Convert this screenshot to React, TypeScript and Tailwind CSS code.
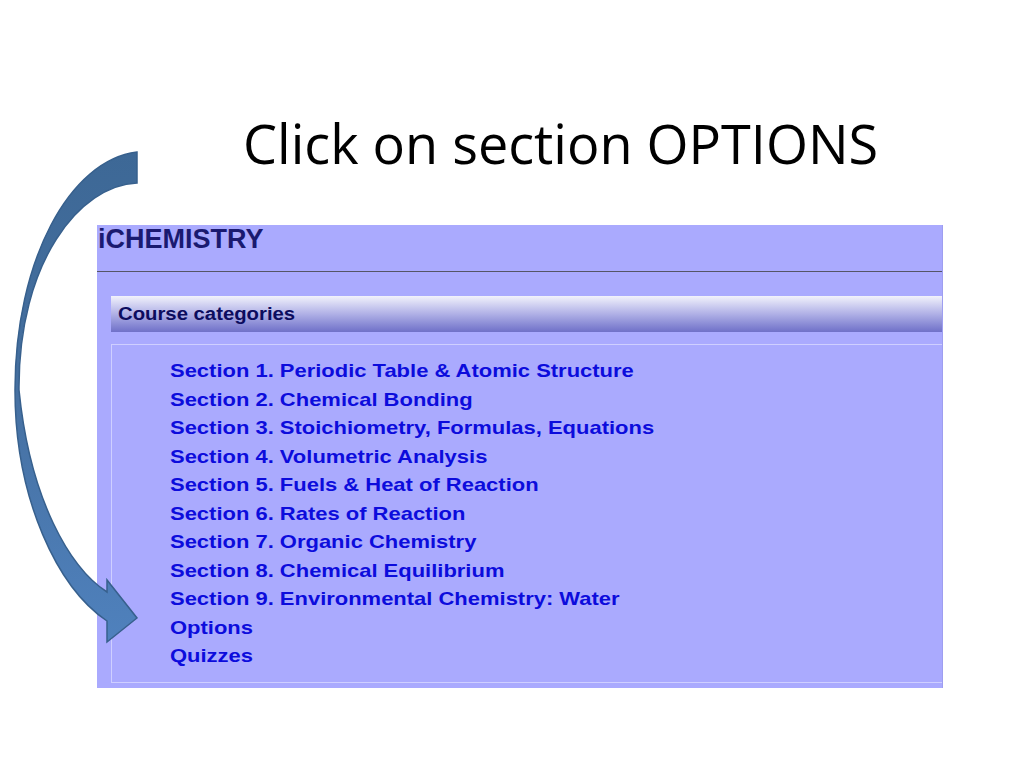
import React from "react";

const links = [
  "Section 1. Periodic Table & Atomic Structure",
  "Section 2. Chemical Bonding",
  "Section 3. Stoichiometry, Formulas, Equations",
  "Section 4. Volumetric Analysis",
  "Section 5. Fuels & Heat of Reaction",
  "Section 6. Rates of Reaction",
  "Section 7. Organic Chemistry",
  "Section 8. Chemical Equilibrium",
  "Section 9. Environmental Chemistry: Water",
  "Options",
  "Quizzes",
];

function CurvedArrow() {
  return (
    <svg
      className="absolute left-0 top-0 pointer-events-none"
      width="160"
      height="660"
      viewBox="0 0 160 660"
    >
      <defs>
        <linearGradient id="arrowFill" x1="0" y1="0" x2="0" y2="1">
          <stop offset="0" stopColor="#3d6896" />
          <stop offset="0.45" stopColor="#456f9f" />
          <stop offset="1" stopColor="#4f81bd" />
        </linearGradient>
      </defs>
      <path
        d="M137 152 C70 160 15 260 15 390 C15 500 58 588 107 621 L107 642 L137 618 L107 580 L107 592 C70 568 30 500 19 390 C18 262 80 185 137 183 Z"
        fill="url(#arrowFill)"
        stroke="#37608d"
        strokeWidth="1.5"
        strokeLinejoin="miter"
      />
    </svg>
  );
}

export default function App() {
  return (
    <div className="relative w-[1024px] h-[768px] bg-white overflow-hidden">
      <div
        className="pt-[116px] pl-[243px] h-[225px] text-black text-[54px] leading-[54px] whitespace-nowrap"
        style={{ fontFamily: '"Open Sans", "Liberation Sans", sans-serif' }}
      >
        Click on section OPTIONS
      </div>

      <div
        className="ml-[97px] w-[846px] h-[463px] bg-[#aaaafe] overflow-hidden flex flex-col border-r border-[#9e9ef0]"
        style={{ fontFamily: '"Liberation Sans", Arial, sans-serif' }}
      >
        <div className="h-[47px] border-b border-[#555566] pl-[1px]">
          <div className="text-[27px] leading-[29px] font-bold text-[#1a1a70]">
            iCHEMISTRY
          </div>
        </div>

        <div className="mt-[24px] ml-[14px] h-[36px] flex items-center pl-[7px] bg-gradient-to-b from-[#f2f2fb] via-[#b0b0e6] to-[#7070c8]">
          <span className="inline-block text-[17.5px] font-bold text-[#0c0c5e] scale-x-[1.16] origin-left whitespace-nowrap">
            Course categories
          </span>
        </div>

        <div className="mt-[12px] ml-[14px] border-t border-l border-b border-[#cfcfff] pt-[12px] pb-[11px] pl-[58px]">
          {links.map((l) => (
            <div key={l} className="h-[28.5px] leading-[28.5px]">
              <span className="inline-block text-[19px] font-bold text-[#0c0cdc] scale-x-[1.156] origin-left whitespace-nowrap">
                {l}
              </span>
            </div>
          ))}
        </div>
      </div>

      <CurvedArrow />
    </div>
  );
}
